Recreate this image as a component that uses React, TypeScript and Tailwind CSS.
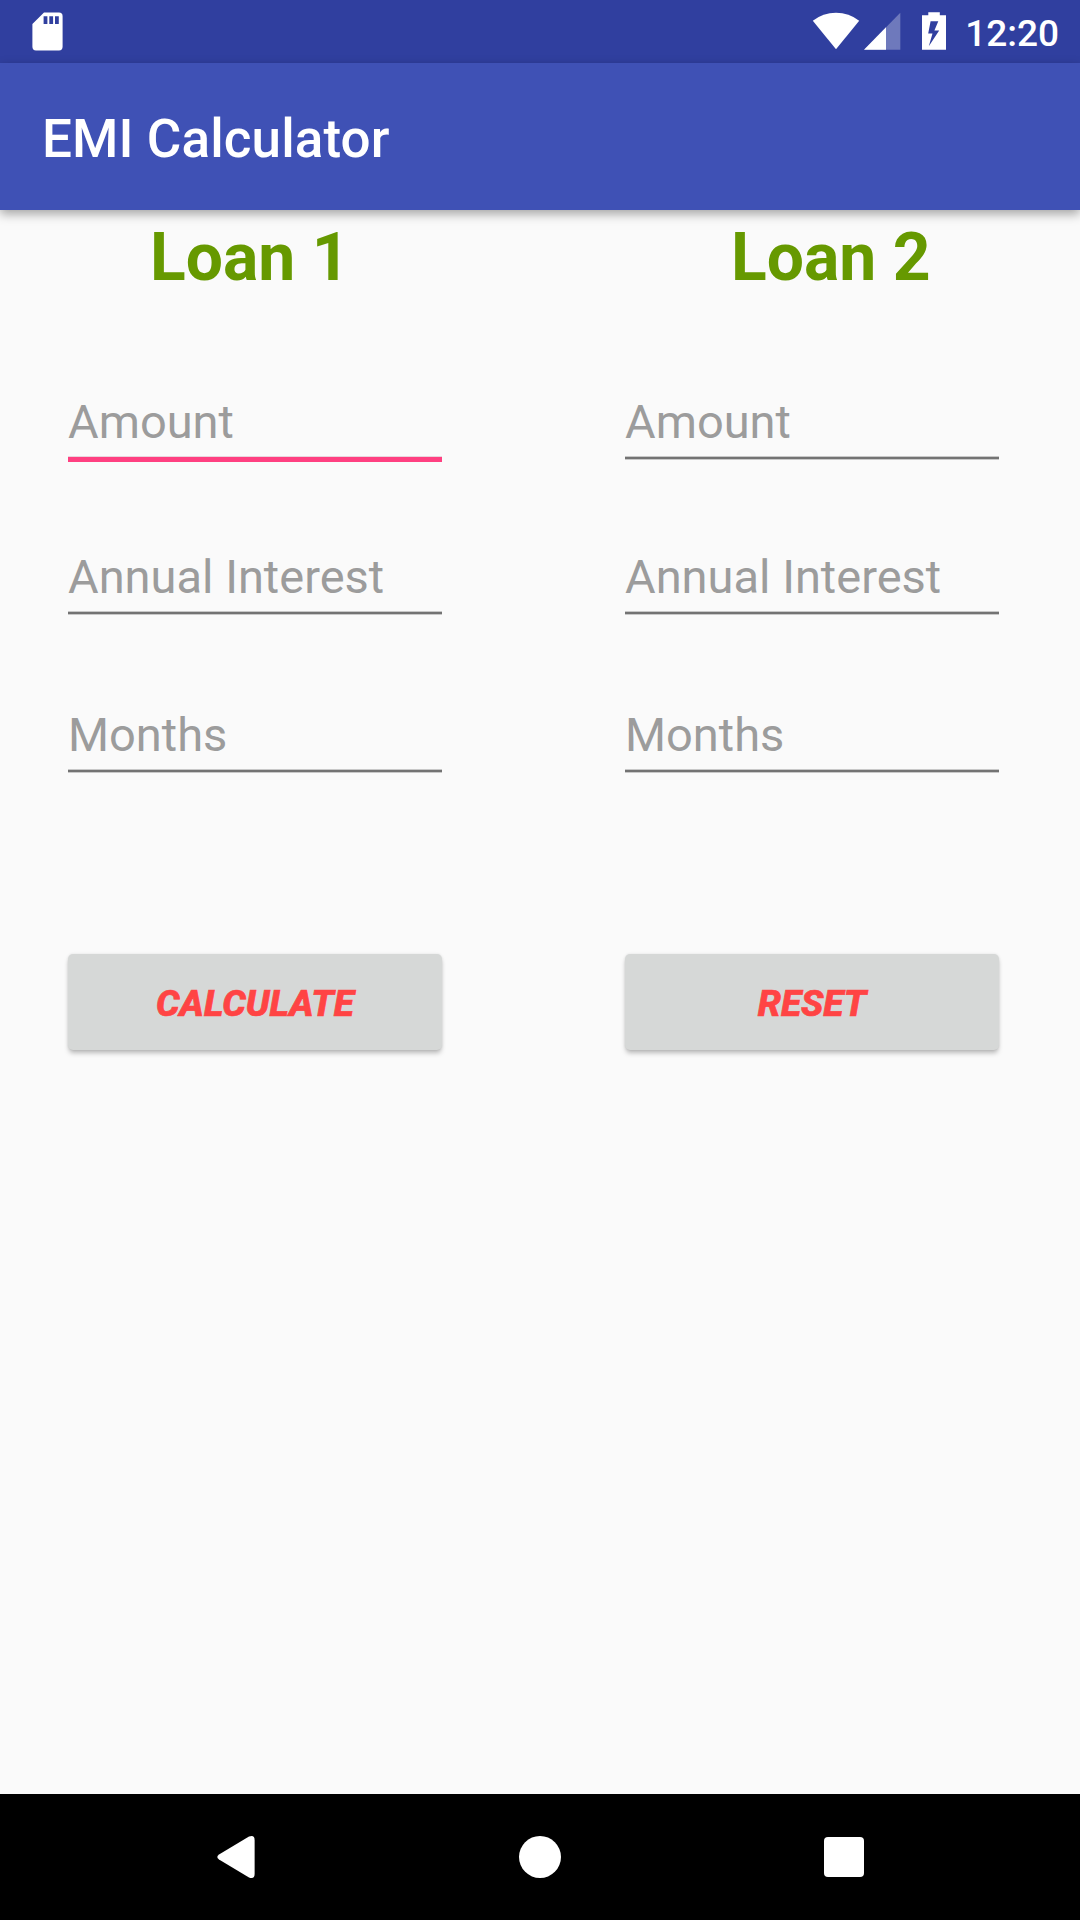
import React from "react";

function StatusBar() {
  return (
    <div className="flex h-[63px] items-start justify-between bg-[#303f9f] pl-8 pr-[21px] text-white">
      <svg className="mt-3 h-[39px] w-8" viewBox="0 0 32 39" fill="currentColor">
        <path
          fillRule="evenodd"
          d="M12 .6H27Q30.6.6 30.6 4.2V34.8Q30.6 38.4 27 38.4H4Q.4 38.4.4 34.8V12ZM11.6 4.3V12H15.4V4.3ZM17.3 4.3V12H21.1V4.3ZM23 4.3V12H26.8V4.3Z"
        />
      </svg>
      <div className="flex items-start">
        <svg className="mt-3 h-[38px] w-12" viewBox="0 0 48 38" fill="currentColor">
          <path d="M24 37.2.8 8.8Q11 .8 24 .8T47.2 8.8Z" />
        </svg>
        <svg className="ml-1 mt-3 h-[38px] w-[37px]" viewBox="0 0 37 38" fill="currentColor">
          <path d="M36.3.8V37.7H0Z" opacity=".3" />
          <path d="M22 15.3V37.7H0Z" />
        </svg>
        <svg className="ml-[21px] mt-3 h-[38px] w-6" viewBox="0 0 24 38" fill="currentColor">
          <path
            fillRule="evenodd"
            d="M6.3.2H17.8V3.2H24V37.8H0V3.2H6.3ZM8.6 9.2 6.2 21.5H10.5L6.8 34.2 17.2 18.6H12.4L16.3 9.2Z"
          />
        </svg>
        <span className="ml-[19px] text-[37px] font-medium leading-[68px]">12:20</span>
      </div>
    </div>
  );
}

function Field({ label, active = false }: { label: string; active?: boolean }) {
  return (
    <div className="flex h-[78px] w-[374px] flex-col">
      <div className="h-[71px] whitespace-nowrap text-[47px] leading-[74px] text-[#9c9c9c]">{label}</div>
      {active ? (
        <div className="h-[6px] border-t border-[#e9d5dc] bg-[#ff4081]" />
      ) : (
        <div className="h-1 border-y border-[#c8c8c8] bg-[#737373]" />
      )}
    </div>
  );
}

function ActionButton({ children }: { children: React.ReactNode }) {
  return (
    <button className="h-24 w-[374px] rounded-[5px] bg-[#d6d8d7] pt-[3px] text-[37px] font-extrabold italic leading-[43px] text-[#ff4444] shadow-[0_4px_5px_-1px_rgba(0,0,0,0.26),0_0_3px_rgba(0,0,0,0.1)] [-webkit-text-stroke:0.7px_#ff4444]">
      {children}
    </button>
  );
}

function NavigationBar() {
  return (
    <nav className="flex h-[126px] items-center justify-between bg-black pl-[217px] pr-[216px] text-white">
      <svg className="h-[42px] w-[38px]" viewBox="0 0 38 42" fill="currentColor">
        <path d="M32 .6Q37.6-1.4 37.6 4V38Q37.6 43.4 32 41.4L2 23.6Q-1.4 21 2 18.4Z" />
      </svg>
      <div className="ml-px size-[42px] rounded-full bg-white" />
      <div className="size-10 rounded-[4px] bg-white" />
    </nav>
  );
}

export default function App() {
  return (
    <div className="flex h-[1920px] w-[1080px] flex-col overflow-hidden bg-[#fafafa] font-['Roboto',sans-serif]">
      <StatusBar />
      <header className="flex h-[147px] items-center bg-[#3f51b5] pl-[42px] pt-1 shadow-[0_4px_10px_rgba(0,0,0,0.35)]">
        <h1 className="text-[53px] font-medium leading-[62px] tracking-[0.1px] text-white">EMI Calculator</h1>
      </header>
      <main className="flex-1">
        <div className="flex pl-[150px] pt-[9px] text-[66px] font-bold leading-[77px] text-[#669900]">
          <h2 className="w-[581px]">Loan 1</h2>
          <h2>Loan 2</h2>
        </div>
        <div className="grid grid-cols-[374px_374px] gap-x-[183px] pl-[68px] pt-[89px]">
          <Field label="Amount" active />
          <Field label="Amount" />
          <div className="col-span-2 h-[77px]" />
          <Field label="Annual Interest" />
          <Field label="Annual Interest" />
          <div className="col-span-2 h-20" />
          <Field label="Months" />
          <Field label="Months" />
          <div className="col-span-2 h-[178px]" />
          <ActionButton>CALCULATE</ActionButton>
          <ActionButton>RESET</ActionButton>
        </div>
      </main>
      <NavigationBar />
    </div>
  );
}
